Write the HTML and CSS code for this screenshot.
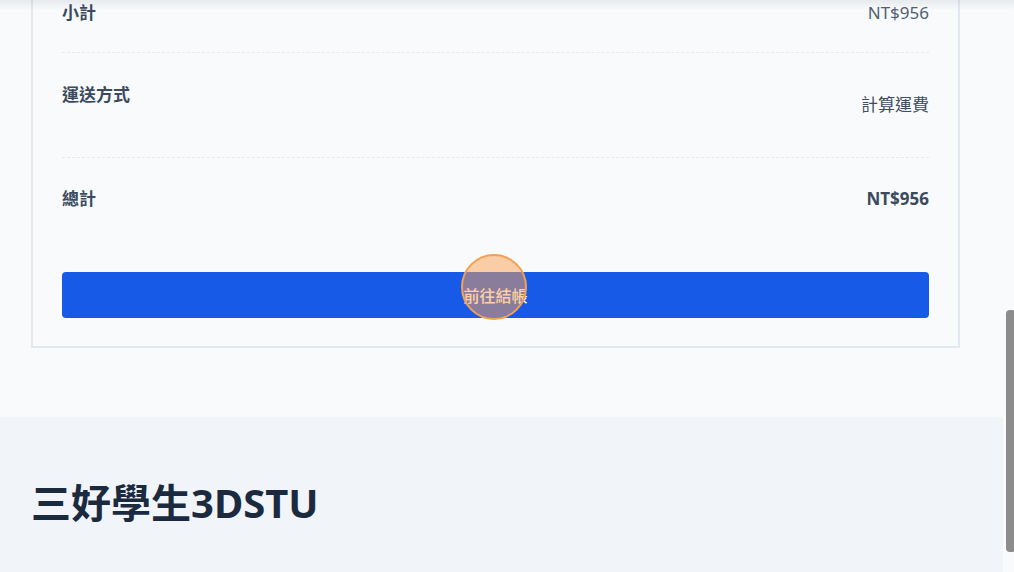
FILE: index.html
```html
<!DOCTYPE html>
<html lang="zh-Hant">
<head>
  <meta charset="UTF-8">
  <meta name="viewport" content="width=device-width, initial-scale=1.0">
  <title>購物車 - 三好學生3DSTU</title>
  <link rel="stylesheet" href="styles.css">
</head>
<body>
  <div class="top-shadow"></div>

  <main class="page">
    <section class="summary">
      <div class="row">
        <span class="label">小計</span>
        <span class="value">NT$956</span>
      </div>
      <div class="row">
        <span class="label">運送方式</span>
        <span class="value value-ship">計算運費</span>
      </div>
      <div class="row row-total">
        <span class="label">總計</span>
        <span class="value value-total">NT$956</span>
      </div>
      <button type="button" class="btn-checkout">前往結帳</button>
    </section>
  </main>

  <footer class="footer">
    <h2 class="brand">三好學生3DSTU</h2>
  </footer>

  <div class="scroll-thumb"></div>
  <div class="tap"></div>
</body>
</html>
```

FILE: styles.css
```css
body {
  margin: 0;
  background: #f8fafc;
  font-family: "Noto Sans", "Noto Sans CJK TC", sans-serif;
  color: #334155;
  overflow: hidden;
}

.top-shadow {
  position: fixed;
  top: 0; left: 0; right: 0;
  height: 10px;
  background: linear-gradient(rgba(15, 23, 42, 0.07), rgba(15, 23, 42, 0));
}

.page { width: 1003px; padding: 0 0 0 31px; margin-top: -60px; }

.summary {
  width: 867px;
  padding: 29px 29px 28px;
  border: 2px solid #e2e8f0;
}

.row {
  display: flex;
  justify-content: space-between;
  align-items: flex-start;
  padding: 30px 0 27px;
  font-size: 17px;
  line-height: 24px;
  border-bottom: 1px dashed #e6eaf0;
}
.row-total { border-bottom: none; padding-top: 29px; padding-bottom: 61px; }

.label { font-weight: 700; color: #3b4a5e; }
.value { color: #526072; }
.value-ship { padding: 10px 0 13px; color: #3f4d60; }
.value-total { font-weight: 700; color: #3b4a5e; }

.btn-checkout {
  display: block;
  width: 100%;
  height: 46px;
  border: none;
  border-radius: 4px;
  background: #175ae8;
  color: #fff;
  font-family: inherit;
  font-size: 16px;
  font-weight: 500;
}

.footer {
  margin-top: 69px;
  width: 1003px;
  background: #f1f5f9;
  padding: 63px 0 0 31px;
  height: 155px;
  box-sizing: border-box;
}
.brand {
  margin: 0;
  font-size: 40px;
  line-height: 46px;
  font-weight: 700;
  color: #1b2a3e;
}

.scroll-thumb {
  position: fixed;
  left: 1006px; top: 310px;
  width: 10px; height: 242px;
  border-radius: 4px;
  background: #8c8c8c;
}

.tap {
  position: fixed;
  left: 461px; top: 254px;
  width: 62px; height: 62px;
  border-radius: 50%;
  border: 2px solid #f4a052;
  background: rgba(253, 160, 80, 0.5);
}
```
